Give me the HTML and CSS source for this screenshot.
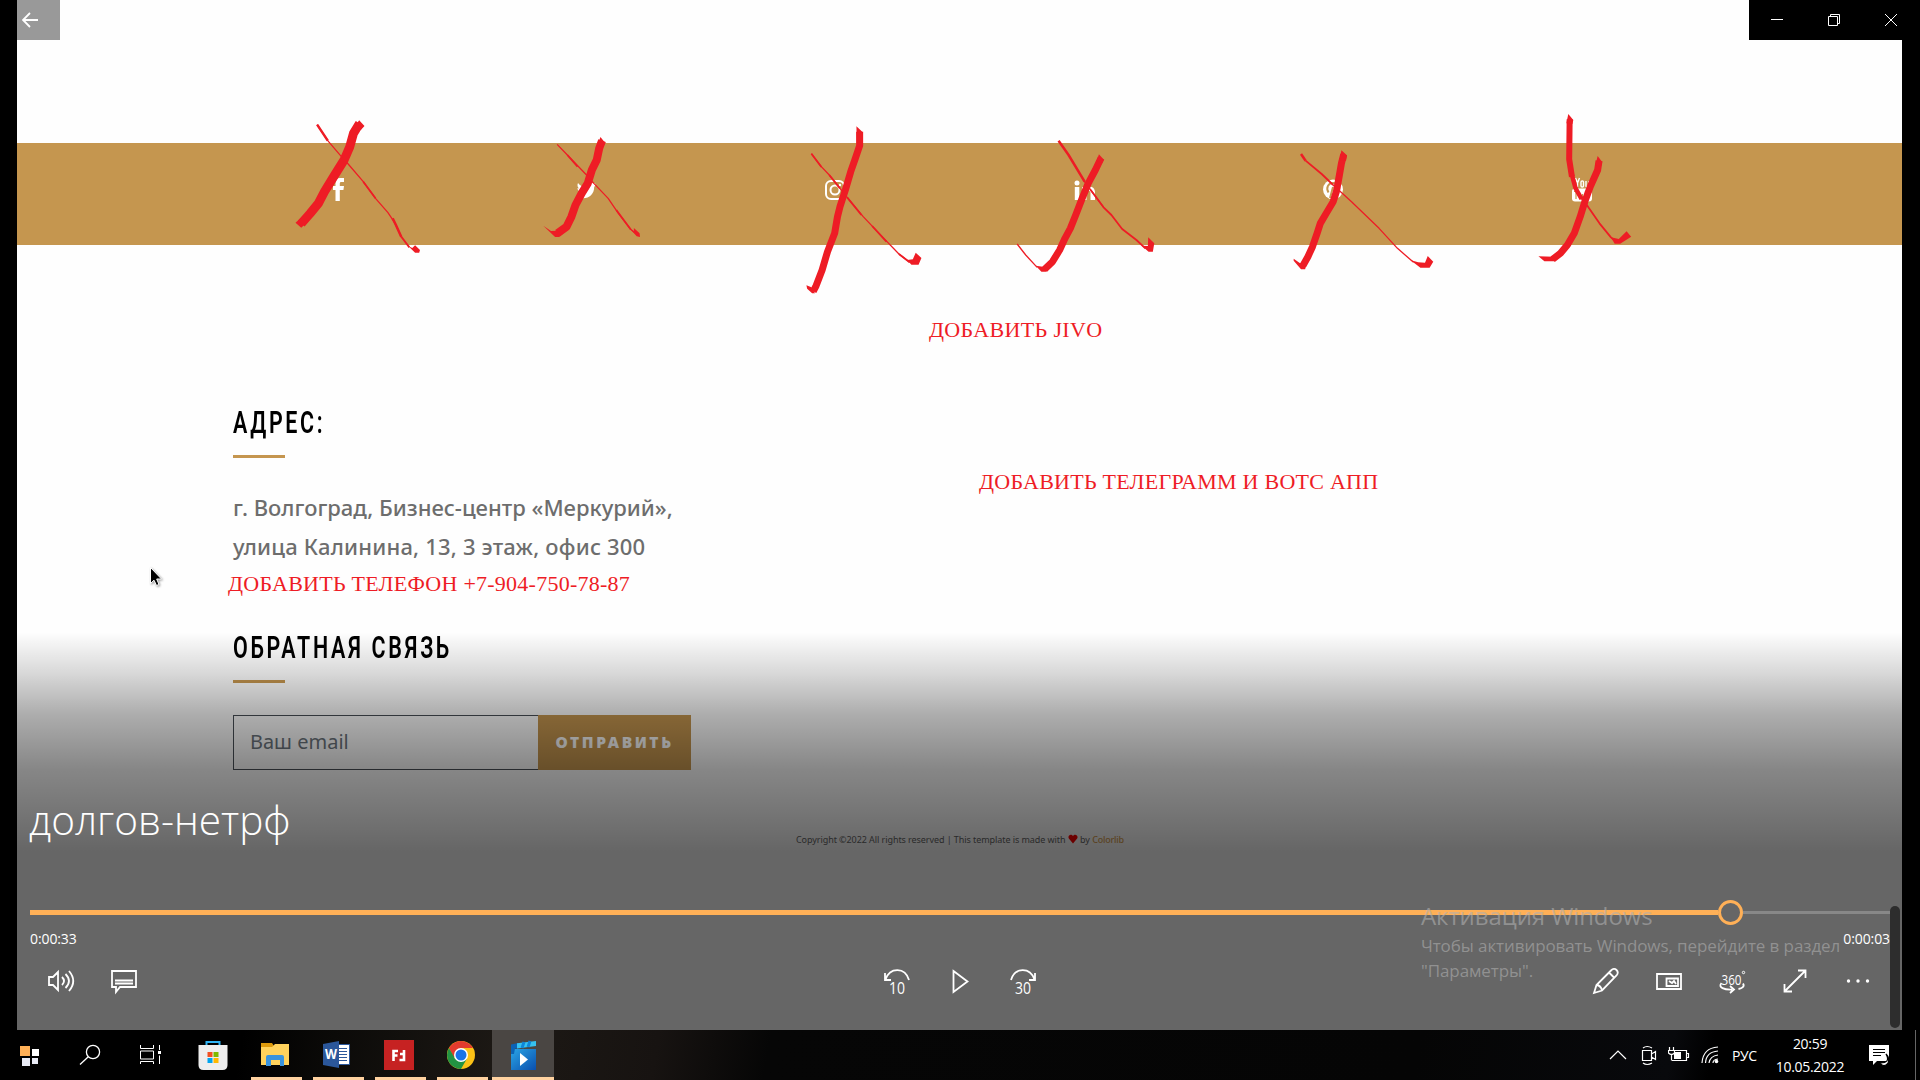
FILE: index.html
```html
<!DOCTYPE html>
<html lang="ru">
<head>
<meta charset="utf-8">
<title>долгов-нетрф</title>
<link rel="stylesheet" href="styles.css">
</head>
<body>
<main class="player">
  <section class="site">
    <div class="social">
      <svg viewBox="0 0 26 26"><path d="M10.500 24V13H8V9h2.500V6.500C10.500 3 12 1 15 1h4v4h-2.500C15 5 14.800 5.600 14.800 7v2H19l-.6 4h-3.600v11z"/></svg>
      <svg viewBox="0 0 26 26"><path d="M22 7c-1 .5-1.500.6-2 .7.800-.5 1.300-1.200 1.500-2-.8.400-1.500.700-2.300.8A4.400 4.400 0 0 0 12 10C8.500 10 6 8.500 4 6c-1 2-.5 4.500 1.300 5.500-.8 0-1.300-.2-1.800-.5 0 2 1.300 3.500 3.200 4-.5.200-1 .2-1.700.1.500 1.500 2 2.600 3.700 2.700-2 1.500-4 1.900-6 1.700 8.500 4.500 17.500 0 17.500-9.500C21 9 21.500 8 22 7z"/></svg>
      <svg viewBox="0 0 26 26"><g fill="none" stroke="#fff" stroke-width="2"><rect x="3" y="4" width="18" height="18" rx="5"/><circle cx="12" cy="13" r="4.500"/></g><circle cx="17" cy="8" r="1.200"/></svg>
      <svg viewBox="0 0 26 26"><circle cx="5" cy="6" r="2.500"/><path d="M2.800 10h4.500v13H2.800zM10 10h4v1.800c2-3.300 9-3 9 3.700V23h-4.500v-7c0-3.500-4-3.500-4 0v7H10z"/></svg>
      <svg viewBox="0 0 26 26"><circle cx="12" cy="12.500" r="10"/><path d="M7.500 15.500c-3-5 0-9.500 4.500-9.500 6 0 7.500 5 5 8.500-1.500 2-4 1.500-4-.5m-1-4-3 11" fill="none" stroke="#c5964f" stroke-width="2"/></svg>
      <svg viewBox="0 0 26 26"><path d="m6.500 1 2 5v4M10.500 1l-2 5M12 5v4c0 1.300 2.500 1.300 2.500 0V5c0-1.500-2.500-1.500-2.500 0zM17 4v5c0 1 2 1 3-.5V4" fill="none" stroke="#fff" stroke-width="1.400"/><rect x="3" y="11.500" width="20" height="13" rx="3"/><path d="M5 14.500h4M7 14.500V22m4-5v4c0 1 1 1 2.500 0v-4m3-3v8h2.500v-5h-2" fill="none" stroke="#c5964f" stroke-width="1.200"/></svg>
    </div>
    <div class="footer">
      <h2><span>Адрес:</span></h2>
      <p class="address"><span>г. Волгоград, Бизнес-центр «Меркурий»,</span><br><span class="street">улица Калинина, 13, 3 этаж, офис 300</span></p>
      <h2 class="feedback"><span>Обратная связь</span></h2>
      <form class="subscribe"><span class="field">Ваш email</span><span class="send">Отправить</span></form>
    </div>
    <p class="copyright">Copyright ©2022 All rights reserved | This template is made with <svg viewBox="0 0 12 11"><path d="M6 11 1 5C-1 1 4-1.500 6 2c2-3.500 7-1 5 3z"/></svg> by <b>Colorlib</b></p>
  </section>

  <div class="marks">
    <svg viewBox="0 0 1920 1030">
      <g transform="scale(.408163 .333333)">
        <path class="w8" d="M881 370 866 400 857 440 843 480 820 525 795 575 780 610 760 640 738 671"/>
        <path class="fill" d="M880 361 893 378 884 390 868 382zM724 668 738 683 755 664 742 648z"/>
        <path class="w3" d="M777 374 803 422M962 655 970 675 983 710"/>
        <path class="w1" d="M777 374 803 422 838 472 853 492 890 545 920 595 950 637 967 668 983 710"/>
        <path class="w2" d="M890 545 920 595M983 710 1003 742"/>
        <path class="fill" d="M1000 738 1010 744 1017 736 1029 750 1027 758 1017 758z"/>
        <path class="w7" d="M1475 422 1468 445 1462 480 1450 510 1440 550 1425 580 1410 615 1400 650 1388 680 1366 700"/>
        <path class="fill" d="M1471 411 1483 429 1478 440 1464 436zM1331 677 1350 693 1366 692 1378 702 1370 711 1360 711z"/>
        <path class="w1" d="M1365 433 1390 465 1437 525 1455 550 1490 595 1515 640 1545 688 1562 705"/>
        <path class="w2" d="M1390 465 1415 500M1510 630 1545 688"/>
        <path class="fill" d="M1540 682 1553 694 1553 684 1567 700 1568 711 1560 709z"/>
      </g>
      <g transform="translate(640 100) scale(.357143 .333333)">
        <path class="w6" d="M615 95 615 137 603 175 590 215 575 270 560 320 553 350 545 400 525 455 510 510 492 560 485 574"/>
        <path class="fill" d="M606 79 623 96 623 130 607 130zM466 556 480 562 490 580 482 580 468 566z"/>
        <path class="w1" d="M480 161 505 197 530 225 560 265 580 292 625 350 680 412 725 462 755 487"/>
        <path class="w2" d="M480 161 508 201M530 225 560 265M580 292 620 345M650 378 690 425M725 462 755 487"/>
        <path class="fill" d="M748 480 764 478 772 458 788 474 780 494 760 494z"/>
        <path class="w6" d="M1291 174 1275 210 1255 250 1238 295 1220 345 1205 385 1190 415 1175 450 1155 485 1133 508"/>
        <path class="fill" d="M1285 163 1299 179 1294 190 1279 182zM1108 497 1128 500 1145 502 1138 515 1124 515z"/>
        <path class="w1" d="M1056 432 1080 465 1112 502M1240 238 1262 270 1298 322"/>
        <path class="w3" d="M1172 122 1200 165 1245 245"/>
        <path class="w2" d="M1262 270 1298 322 1320 345 1350 387 1390 420 1415 445"/>
        <path class="fill" d="M1405 437 1422 438 1423 412 1440 430 1436 455 1424 455z"/>
      </g>
      <g transform="translate(1200 0) scale(.459184 .333333)">
        <path class="w6" d="M313 463 308 490 303 530 297 575 290 605 275 640 262 670 255 700 245 740 235 770 224 797"/>
        <path class="fill" d="M308 451 320 466 318 482 304 480zM204 776 218 790 232 790 229 808 220 808 204 782z"/>
        <path class="w3" d="M220 462 230 482"/>
        <path class="w2" d="M230 482 265 522 290 555"/>
        <path class="w1" d="M290 555 330 605 390 685 430 745 465 787"/>
        <path class="fill" d="M458 780 475 787 490 788 496 768 508 785 500 803 480 803z"/>
        <path class="w5" d="M805 358 804 478 810 530"/>
        <path class="fill" d="M802 342 813 360 811 372 798 370z"/>
        <path class="w4" d="M809 520 818 565 831 597"/>
        <path class="w2" d="M828 590 845 620 870 670 895 712 905 725"/>
        <path class="fill" d="M895 712 912 717 929 694 939 710 915 731 903 731z"/>
        <path class="w6" d="M869 482 866 510 850 560 838 605 828 650 815 700 800 735 785 760 768 778"/>
        <path class="fill" d="M866 468 876 486 873 500 861 496zM737 769 770 770 778 776 772 784 750 784z"/>
      </g>
    </svg>
    <span class="note note-jivo">ДОБАВИТЬ JIVO</span>
    <span class="note note-chat">ДОБАВИТЬ ТЕЛЕГРАММ И ВОТС АПП</span>
    <span class="note note-phone">ДОБАВИТЬ ТЕЛЕФОН +7-904-750-78-87</span>
  </div>

  <div class="overlay">
    <div class="title">долгов-нетрф</div>
    <div class="seek"><i class="done"></i><i class="knob"></i><i class="rest"></i></div>
    <div class="times"><span>0:00:33</span><span>0:00:03</span></div>
    <div class="controls">
      <div class="group">
        <svg viewBox="0 0 26 26"><path d="M1 9h4l5-5v18l-5-5H1zM14 9q4 4 0 8m3.500-11q7 7 0 14M21 3q8.500 10 0 20"/></svg>
        <svg viewBox="0 0 26 26"><path d="M1 3h24v16H9l-4 5v-5H1zM4 12.500h18M4 15.500h18"/></svg>
      </div>
      <div class="group">
        <svg viewBox="0 0 26 26"><path d="M1 5v7h6M1.500 11.500C6-1 21-1 25 12"/><text x="13" y="25.500" textLength="16" lengthAdjust="spacingAndGlyphs">10</text></svg>
        <svg viewBox="0 0 26 26"><path d="m6.500 3 14 10.500L6.500 24z"/></svg>
        <svg viewBox="0 0 26 26"><path d="M25 5v7h-6M24.500 11.500C20-1 5-1 1 12"/><text x="13" y="25.500" textLength="16" lengthAdjust="spacingAndGlyphs">30</text></svg>
      </div>
      <div class="group">
        <svg viewBox="0 0 26 26"><path d="m1 25 2.500-8L18 2.500q3-3 5.500-.5t0 5.500L9 22.500zM16 4.500l5.500 5.500M3.500 17q4.500.5 5.500 5.500"/></svg>
        <svg viewBox="0 0 26 26"><path d="M1 6h24v15H1zM10.500 10.500H22V18H10.500zM13 13l3 2 2-2 2 3"/></svg>
        <svg viewBox="0 0 26 26"><path d="M2.500 15c-4 4.500 3 7 11 6.500M24 15.500c2 3-1 5-4.500 5.500M11 18l4 3.500-4 3.500"/><text class="deg" x="12.500" y="16.500" textLength="20" lengthAdjust="spacingAndGlyphs">360</text><circle cx="24.500" cy="4.500" r="1.200" stroke-width="1"/></svg>
        <svg viewBox="0 0 26 26"><path d="M2.500 23.500 23.500 2.500M16 2.500h7.500V10M2.500 16v7.500H10"/></svg>
        <svg viewBox="0 0 26 26"><g fill="#fff" stroke="none"><circle cx="3.500" cy="13" r="1.700"/><circle cx="13" cy="13" r="1.700"/><circle cx="22.500" cy="13" r="1.700"/></g></svg>
      </div>
    </div>
  </div>

  <div class="watermark"><strong>Активация Windows</strong><span>Чтобы активировать Windows, перейдите в раздел</span><span>"Параметры".</span></div>
  <div class="scrollbar"></div>
  <div class="back"><svg viewBox="0 0 16 16"><path d="M16 8H1M8 1 1 8l7 7"/></svg></div>
  <div class="window-buttons">
    <svg viewBox="0 0 12 12"><path d="M0 5.500h12"/></svg>
    <svg viewBox="0 0 12 12"><path d="M.5 2.500h9v9h-9zM2.500 2.500v-2h9v9h-2"/></svg>
    <svg viewBox="0 0 12 12"><path d="m0 0 12 12M12 0 0 12"/></svg>
  </div>
  <svg class="cursor" viewBox="0 0 12 20"><path d="M.5 1v16l3.500-3.300L6.500 19l2.500-1-2.300-5.500H11.500z"/></svg>
</main>

<footer class="taskbar">
  <div class="apps">
    <span class="app start"><svg viewBox="0 0 30 30"><path fill="#ffb057" d="M5 1h10v10H5z"/><path fill="#fff" d="M17 4h7v7h-7z"/><path fill="#e9ebf5" d="M7 13h8v8H7zM17 13h6v6h-6z"/></svg></span>
    <span class="app search"><svg viewBox="0 0 30 30"><g fill="none" stroke="#fff" stroke-width="1.300"><circle cx="18" cy="12" r="6.600"/><path d="M13.300 16.700 5 24.500"/></g></svg></span>
    <span class="app views"><svg viewBox="0 0 30 30"><path d="M4.500 5v3.500h13V5M4.500 11h13v8h-13zM4.500 24v-2.500h13V24M23.500 5v5M23.500 15.500V24" fill="none" stroke="#fff"/><path fill="#fff" d="M22 11h3v3h-3z"/></svg></span>
    <span class="app"><svg viewBox="0 0 30 30"><path d="M8.500 6V2h13v4" fill="none" stroke="#2fb4f5" stroke-width="2"/><path fill="#eee" d="M.5 5h29v20q0 5-5 5h-19q-5 0-5-5z"/><path fill="#f25022" d="M9.500 12h5v5h-5z"/><path fill="#7fba00" d="M15.500 12h5v5h-5z"/><path fill="#00a4ef" d="M9.500 18h5v5h-5z"/><path fill="#ffb900" d="M15.500 18h5v5h-5z"/></svg></span>
    <span class="app open"><svg viewBox="0 0 30 30"><path fill="#dd9a0c" d="M1 3h11l2 3v5H1z"/><path fill="#ffd25c" d="M1 7h11l3-3h14v21H1z"/><path fill="#3993dd" d="M6 26V17q0-2 2-2h14q2 0 2 2v9h-4v-6h-9v6z"/></svg></span>
    <span class="app open"><svg viewBox="0 0 30 30"><path fill="#fff" stroke="#2b579a" d="M16 4.500h11.500v20H16z"/><path stroke="#2b579a" d="M17 8.500h8m-8 3h8m-8 3h8m-8 3h8m-8 3h8"/><path fill="#2b579a" d="m1 4 16-3v27L1 25z"/><text class="glyph-w" x="9" y="19" textLength="12" lengthAdjust="spacingAndGlyphs">W</text></svg></span>
    <span class="app open"><svg viewBox="0 0 30 30"><path fill="#c62222" d="M0 0h30v30H0z"/><path d="M9.500 21V11H14M9.500 15.500h4M15.500 20H20V10M16 14h3" fill="none" stroke="#fff" stroke-width="2.600"/></svg></span>
    <span class="app open"><svg viewBox="0 0 30 30"><circle cx="15" cy="15" r="14" fill="#fbc116"/><path fill="#e33b2e" d="M2.900 8A14 14 0 0 1 27.100 8H15L8 18z"/><path fill="#229342" d="M2.900 8A14 14 0 0 0 15 29l6-10.500-12 0z"/><circle cx="15" cy="15" r="7" fill="#fff"/><circle cx="15" cy="15" r="5.500" fill="#1a73e8"/></svg></span>
    <span class="app open active"><svg viewBox="0 0 30 30"><defs><linearGradient id="mv" x2="1" y2="1"><stop stop-color="#2aa5e5"/><stop offset="1" stop-color="#0a4fae"/></linearGradient></defs><path fill="url(#mv)" d="M3 9h25v21H3z"/><path fill="#0b63b5" d="M3 4.500 10 3v5.500H7L6 14H3z"/><path fill="#36c2f0" d="M9 3.300 28 1v5L9 8.500z"/><path d="m16 2-2 6m8-7-2 6" stroke="#0f86d8" stroke-width="3"/><path fill="#fff" d="m12 13 8 6.500-8 6.500z"/></svg></span>
  </div>
  <div class="tray">
    <svg class="chev" viewBox="0 0 18 22"><path d="m1 15 8-8 8 8"/></svg>
    <svg class="meet" viewBox="0 0 16 22"><path d="M1.500 6.500h9v10h-9zM10.500 10l4-2.500v8l-4-2.500M2 4q4-3 9 0M2 19q4 3 9 0"/></svg>
    <svg class="batt" viewBox="0 0 22 22"><path d="M6.500 6.500h12v10H4M18.500 9.500h2v4h-2M1.500 3v3m4-3v3M.5 6.500h6V9q-3 3-6 0zM3.500 10v6.500"/><path fill="#fff" stroke="none" d="M6 8h7v7H6z"/></svg>
    <svg class="wifi" viewBox="0 0 18 22"><path d="M1 19Q2 4 17 3M4.500 19Q5 8 17 7M8 19Q9 12 17 11M12 19Q12 15.500 17 15"/><circle cx="15.500" cy="17.500" r="1.800" fill="#fff" stroke="none"/></svg>
    <span class="lang">РУС</span>
    <span class="clock"><span>20:59</span><span>10.05.2022</span></span>
    <svg class="notif" viewBox="0 0 20 21"><path fill="#fff" stroke="none" d="M0 0h20v16H8l-4 4v-4H0z"/><path stroke="#000" d="M4 4.500h12M4 7.500h12M4 10.500h8"/><path fill="#fff" stroke="#000" d="M17 9q5 9-6 9 4 5 8 0 2-5-2-9z"/></svg>
    <i class="peek"></i>
  </div>
</footer>
</body>
</html>
```
FILE: styles.css
```css
* { box-sizing: border-box; }
body {
  margin: 0;
  width: 1920px;
  height: 1080px;
  display: flex;
  flex-direction: column;
  overflow: hidden;
  background: #000;
  font-family: "Open Sans", "Noto Sans", sans-serif;
}
svg { display: block; }
h2, p { margin: 0; }

.player { position: relative; height: 1030px; padding: 0 18px 0 17px; }

/* web page shown in the video */
.site { height: 1030px; padding-top: 143px; background: #fefefe; }
.social {
  height: 102px;
  padding: 0 197px 8px;
  display: grid;
  grid-template-columns: repeat(6, 248.800px);
  align-items: center;
  justify-items: center;
  background: #c5964f;
}
.social svg { width: 26px; height: 26px; fill: #fff; }
.footer { padding: 156px 0 0 216px; }
.footer h2 {
  height: 57px;
  width: 52px;
  border-bottom: 3px solid #c5964f;
  font: 600 32px/42px Roboto, sans-serif;
  letter-spacing: 4px;
  text-transform: uppercase;
  white-space: nowrap;
  color: #000;
}
.footer h2 span { display: inline-block; transform: scaleX(.67); transform-origin: left; }
.address {
  height: 112px;
  margin-top: 30px;
  font: 500 22px/39px "Noto Sans", sans-serif;
  color: #6d6d6d;
  white-space: nowrap;
}
.street { letter-spacing: .2px; }
.feedback { margin-top: 26px; }
.subscribe { display: flex; width: 458px; height: 55px; margin-top: 32px; }
.field {
  width: 305px;
  border: 1px solid #495057;
  border-right: 0;
  padding-left: 16px;
  font: 20px/51px "Noto Sans", sans-serif;
  color: #6c757d;
}
.send {
  flex: 1;
  background: #c5964f;
  color: #fff;
  font: 900 15.500px/54px "Noto Sans", sans-serif;
  letter-spacing: 2.600px;
  text-transform: uppercase;
  text-align: center;
}
.copyright {
  display: flex;
  margin: 62px 0 0 779px;
  font: 9px/16px "Noto Sans", sans-serif;
  letter-spacing: -.07px;
  color: #666;
  white-space: pre;
}
.copyright svg { width: 10px; height: 10px; margin-top: 2px; fill: #f00; }
.copyright b { font-weight: 500; letter-spacing: -.2px; color: #d9a050; }

/* red pen notes drawn over the page */
.marks { position: absolute; inset: 0; color: #ee1c25; }
.marks svg { width: 1920px; height: 1030px; fill: none; stroke: #ee1c25; stroke-linejoin: round; }
.marks path { vector-effect: non-scaling-stroke; }
.marks .fill { fill: #ee1c25; stroke: none; }
.w1 { stroke-width: 1.300px; }
.w2 { stroke-width: 1.800px; }
.w3 { stroke-width: 2.500px; }
.w4 { stroke-width: 4.500px; }
.w5 { stroke-width: 6px; }
.w6 { stroke-width: 7px; }
.w7 { stroke-width: 8px; }
.w8 { stroke-width: 9px; }
.note { position: absolute; font: 22px/26px "Liberation Serif", serif; letter-spacing: .25px; white-space: nowrap; }
.note-jivo { left: 929px; top: 317px; letter-spacing: .35px; }
.note-chat { left: 979px; top: 469px; }
.note-phone { left: 228px; top: 571px; }

/* player controls */
.overlay {
  position: absolute;
  left: 17px;
  right: 18px;
  bottom: 0;
  height: 398px;
  padding: 158px 12px 0 13px;
  background: linear-gradient(rgba(0,0,0,0), rgba(0,0,0,.15) 41px, rgba(0,0,0,.32) 83px, rgba(0,0,0,.47) 137px, rgba(0,0,0,.6) 220px);
  color: #fff;
}
.title { height: 60px; font-weight: 300; font-size: 40.600px; line-height: 59px; white-space: nowrap; margin-left: -1px; }
.seek { display: flex; align-items: center; height: 25px; margin-top: 50px; }
.done { width: 1688px; height: 5px; background: #ffb057; }
.knob { width: 25px; height: 25px; border: 3px solid #ffb057; border-radius: 50%; }
.rest { flex: 1; height: 3px; background: #888; }
.times { display: flex; justify-content: space-between; height: 28px; font-size: 14px; line-height: 28px; letter-spacing: -.1px; }
.controls {
  display: grid;
  grid-template-columns: 1fr auto 1fr;
  margin: -2px 1px 0 -1px;
}
.group { display: flex; height: 60px; align-items: center; }
.group:nth-child(2) { padding-left: 2px; }
.group:last-child { justify-content: flex-end; }
.group svg { width: 26px; height: 26px; margin: 0 18.500px; overflow: visible; fill: none; stroke: #fff; stroke-width: 1.800; }
.group text { fill: #fff; stroke: none; font-size: 16px; text-anchor: middle; }
.group .deg { font-size: 14px; }

.watermark {
  position: absolute;
  left: 1421px;
  top: 899px;
  display: flex;
  flex-direction: column;
  color: rgba(175,175,175,.6);
  white-space: nowrap;
  font-size: 17px;
  line-height: 25px;
  letter-spacing: -.09px;
}
.watermark strong { font-weight: 400; font-size: 24px; line-height: 34px; }
.scrollbar { position: absolute; left: 1890px; top: 906px; width: 10px; height: 122px; border-radius: 5px; background: #2d2d2d; }
.back { position: absolute; left: 17px; top: 0; width: 43px; height: 40px; padding: 12px 5px; background: #999; }
.back svg { width: 16px; height: 16px; fill: none; stroke: #fff; stroke-width: 1.800; }
.window-buttons {
  position: absolute;
  right: 0;
  top: 0;
  width: 171px;
  height: 40px;
  padding-right: 1px;
  display: grid;
  grid-template-columns: 56px 57px 57px;
  place-items: center;
  background: #000;
}
.window-buttons svg { width: 12px; height: 12px; fill: none; stroke: #fff; overflow: visible; }
.cursor { position: absolute; left: 150px; top: 566px; width: 12px; height: 21px; fill: #000; stroke: #fff; overflow: visible; filter: drop-shadow(1px 1px 1px rgba(0,0,0,.4)); }

/* windows taskbar */
.taskbar {
  height: 50px;
  display: flex;
  justify-content: space-between;
  background: linear-gradient(100deg, #000 240px, #0b0a08 330px, #1d1915 500px, #171311 650px, #060606 760px, #050505 1400px, #08090c 1650px, #000 1690px);
}
.apps { display: flex; }
.app { width: 62px; height: 50px; padding: 10px 0 0 16px; }
.app.start { width: 59px; padding-left: 15px; padding-top: 15px; }
.app.search { width: 61px; }
.app.views { width: 63px; padding-left: 16px; }
.app:nth-child(4) { width: 61px; padding-left: 15px; }
.app:nth-child(5) { width: 62px; }
.app svg { width: 30px; height: 30px; }
.app.open { display: grid; grid-template-rows: 37px 3px; }
.app.open::after { content: ""; width: 51px; height: 3px; margin-left: -9px; background: #ffd2a0; }
.app.active { background: #4a4643; }
.app.active::after { width: 62px; margin-left: -16px; }
.glyph-w { fill: #fff; font: bold 14px "Open Sans", sans-serif; text-anchor: middle; }
.tray { display: flex; align-items: center; width: 311px; color: #fff; font-size: 14px; }
.tray svg { height: 22px; fill: none; stroke: #fff; stroke-width: 1.200; flex: none; }
.tray .chev { width: 18px; }
.tray .meet { width: 16px; margin-left: 14px; }
.tray .batt { width: 22px; margin-left: 11px; }
.tray .wifi { width: 18px; margin-left: 11px; }
.lang { width: 27px; margin-left: 13px; letter-spacing: -.4px; }
.clock { display: flex; flex-direction: column; align-items: center; width: 80px; margin-left: 11px; line-height: 23px; letter-spacing: -.3px; }
.tray .notif { width: 20px; height: 21px; margin-left: 19px; }
.peek { width: 1px; height: 50px; margin-left: 26px; background: #666; }
```
